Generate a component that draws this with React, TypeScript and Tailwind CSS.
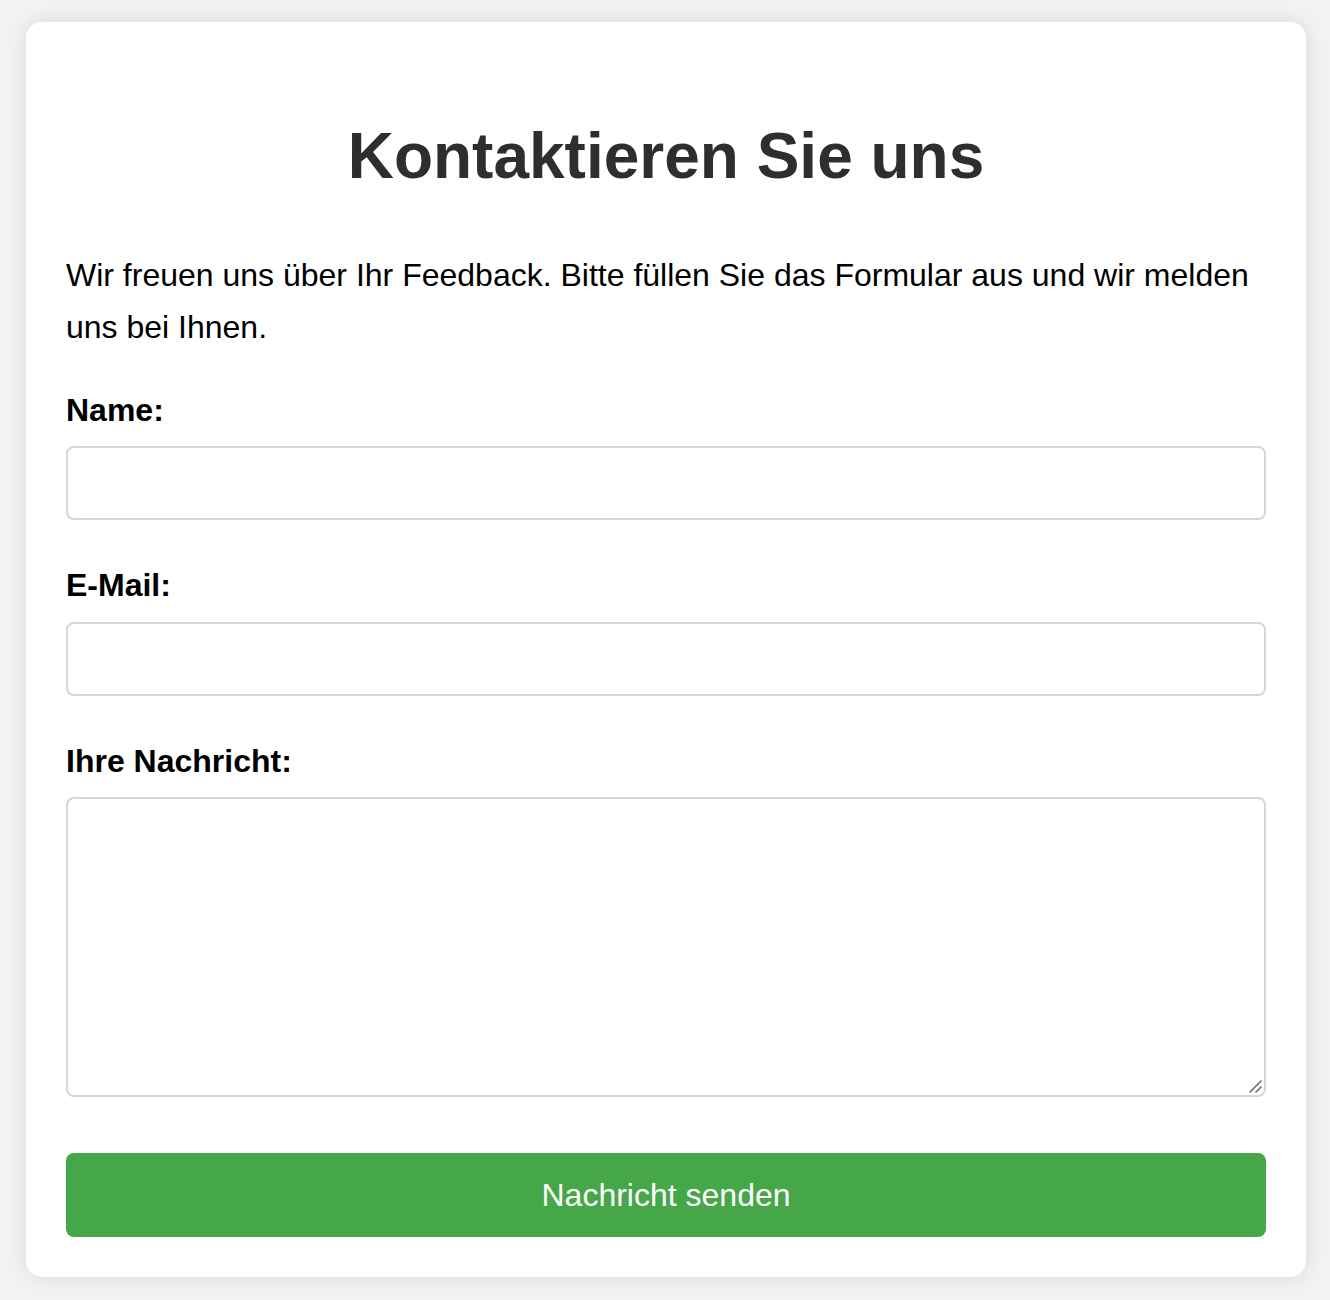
const fieldClass =
  "block w-full box-border rounded-lg border-2 border-[#d6d6d6] bg-white px-5 py-5 text-[26.67px] leading-[1.15] text-black outline-none";

const labelClass = "mb-[10px] block text-[32px] font-bold leading-[1.6]";

const App = () => {
  return (
    <div className="min-h-[1300px] bg-[#f2f2f2] pt-[22px] font-['Liberation_Sans',Arial,sans-serif] leading-[1.6] text-black">
      <div className="ml-[26px] w-[1280px] rounded-2xl bg-white p-10 shadow-[0_0_20px_rgba(0,0,0,0.1)]">
        <h1 className="mt-[43px] mb-[43px] text-center text-[64px] font-bold leading-[1.6] text-[#2e2e2e]">
          Kontaktieren Sie uns
        </h1>
        <p className="mb-8 text-[32px] leading-[1.6]">
          Wir freuen uns über Ihr Feedback. Bitte füllen Sie das Formular aus und wir melden uns bei Ihnen.
        </p>
        <form onSubmit={(e) => e.preventDefault()}>
          <label htmlFor="name" className={labelClass}>
            Name:
          </label>
          <input id="name" type="text" className={`${fieldClass} mb-10 h-[74.5px]`} />

          <label htmlFor="email" className={labelClass}>
            E-Mail:
          </label>
          <input id="email" type="email" className={`${fieldClass} mb-10 h-[74.5px]`} />

          <label htmlFor="message" className={labelClass}>
            Ihre Nachricht:
          </label>
          <div className="relative mb-14">
            <textarea id="message" className={`${fieldClass} h-[300px] resize-none`} />
            {/* resize grip */}
            <svg
              className="pointer-events-none absolute right-[4px] bottom-[4px] h-[14px] w-[14px]"
              viewBox="0 0 14 14"
            >
              <path d="M2 13 L13 2 M8 13 L13 8" stroke="#6b6b6b" strokeWidth="1.6" strokeLinecap="round" />
            </svg>
          </div>

          <button
            type="submit"
            className="block h-[84px] w-full cursor-pointer rounded-lg bg-[#45a748] text-[32px] leading-[1.15] text-white"
          >
            Nachricht senden
          </button>
        </form>
      </div>
    </div>
  );
};

export default App;
